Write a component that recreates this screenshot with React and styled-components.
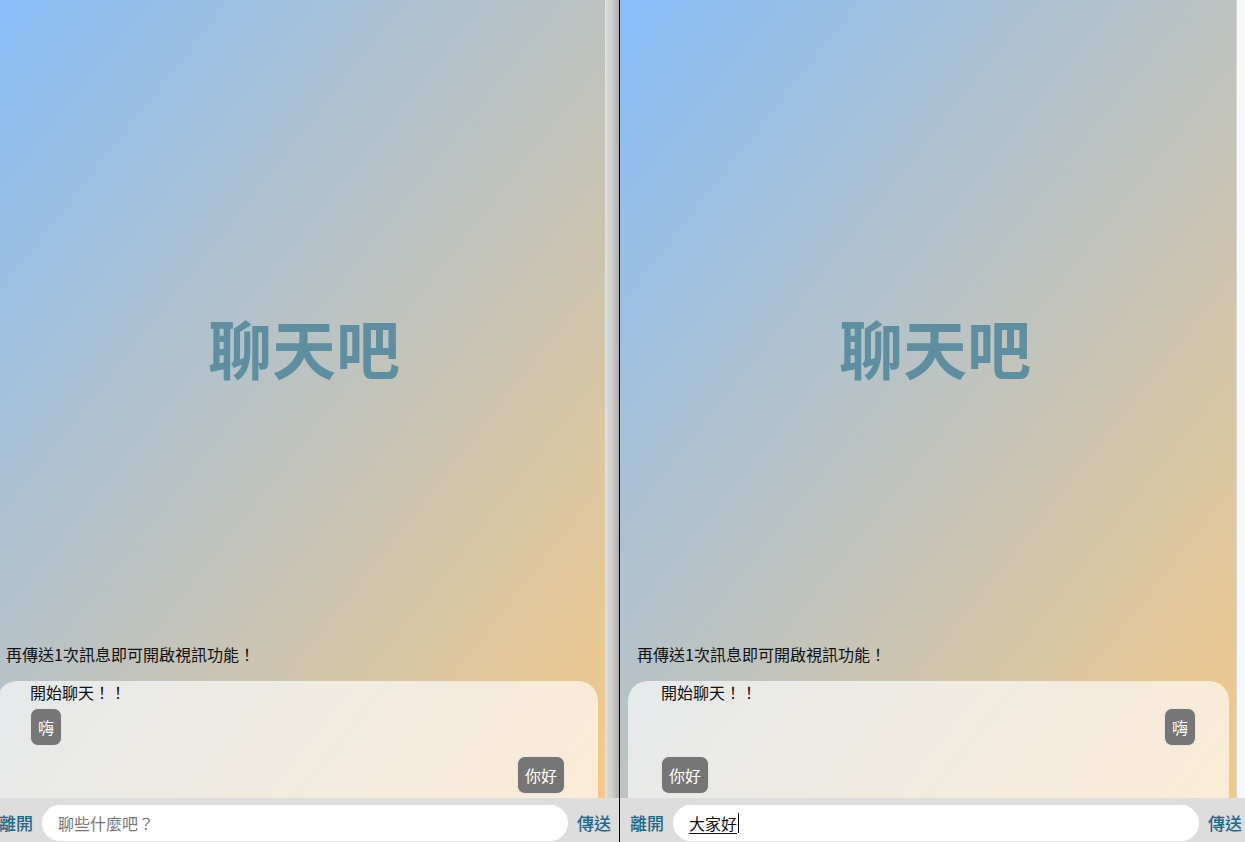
import React from "react";
import styled, { createGlobalStyle } from "styled-components";

const Global = createGlobalStyle`
  html, body { margin: 0; padding: 0; overflow: hidden; background: #ffffff; }
  body { font-family: "Noto Sans CJK TC", "Noto Sans", sans-serif; }
  * { box-sizing: border-box; }
`;

const Screen = styled.div`
  display: flex;
  width: 1245px;
  height: 842px;
  overflow: hidden;
`;

const Frame = styled.div`
  flex: none;
  width: ${(p) => p.$width}px;
  height: 842px;
  overflow: hidden;
  border-right: ${(p) => (p.$divider ? "1px solid #000" : "none")};
`;

const Page = styled.div`
  position: relative;
  width: 630px;
  height: 842px;
  margin-left: ${(p) => -p.$scrollX}px;
  display: flex;
  flex-direction: column;
`;

const Main = styled.div`
  flex: 1;
  display: flex;
  flex-direction: column;
  background: linear-gradient(to bottom right, #87bdf8 0%, #f4c987 100%);
  min-height: 0;
`;

const Gutter = styled.div`
  position: absolute;
  top: 0;
  right: 0;
  bottom: 44px;
  width: 14px;
  background: ${(p) =>
    p.$variant === "dark"
      ? "linear-gradient(to right, #dcdcdc 0%, #cfcfcf 45%, #adadad 100%)"
      : "#f8f8f8"};
  border-left: 1px solid ${(p) => (p.$variant === "dark" ? "#e2e2e2" : "#d4d4d4")};
`;

const Title = styled.h1`
  margin: 314px 0 0;
  text-align: center;
  font-size: 64px;
  line-height: 64px;
  font-weight: 700;
  color: #5e8fa1;
`;

const Spacer = styled.div`
  flex: 1;
`;

const Notice = styled.div`
  margin: 0 0 16px 17px;
  font-size: 16px;
  line-height: 22px;
  color: #111;
`;

const ChatBox = styled.div`
  height: 117px;
  margin: 0 21px 0 8px;
  padding: 1px 33px 0;
  border-radius: 20px 20px 0 0;
  background: rgba(255, 255, 255, 0.65);
  overflow: hidden;
`;

const ChatHeader = styled.div`
  font-size: 16px;
  line-height: 20px;
  color: #111;
`;

const MsgRow = styled.div`
  display: flex;
  justify-content: ${(p) => (p.$mine ? "flex-end" : "flex-start")};
  padding: 6px 0 4px;
`;

const Bubble = styled.div`
  padding: 7px 7px;
  border: 1px solid #e6e6e6;
  border-radius: 8px;
  background: #767676;
  color: #fff;
  font-size: 16px;
  line-height: 22px;
  min-width: 32px;
  text-align: center;
`;

const Bar = styled.div`
  position: relative;
  z-index: 1;
  flex: none;
  height: 44px;
  display: flex;
  align-items: flex-start;
  gap: 9px;
  padding: 7px 8px 0 10px;
  background: #dddddd;
`;

const BarButton = styled.button`
  flex: none;
  border: 0;
  padding: 0;
  background: none;
  height: 36px;
  font-family: inherit;
  font-size: 17px;
  font-weight: 500;
  line-height: 36px;
  color: #1f6a8b;
  cursor: pointer;
`;

const InputPill = styled.div`
  flex: 1;
  height: 36px;
  display: flex;
  align-items: center;
  padding: 0 16px;
  border-radius: 18px;
  background: #fff;
  font-size: 16px;
  line-height: 22px;
  color: ${(p) => (p.$placeholder ? "#777" : "#111")};
`;

const Composing = styled.span`
  text-decoration: underline;
  text-underline-offset: 3px;
  text-decoration-thickness: 1px;
`;

const Caret = styled.span`
  display: inline-block;
  width: 1px;
  height: 20px;
  background: #000;
  margin-left: 1px;
`;

function ChatFrame({ width, scrollX, divider, gutter, messages, input }) {
  return (
    <Frame $width={width} $divider={divider}>
      <Page $scrollX={scrollX}>
        <Main>
          <Title>聊天吧</Title>
          <Spacer />
          <Notice>再傳送1次訊息即可開啟視訊功能！</Notice>
          <ChatBox>
            <ChatHeader>開始聊天！！</ChatHeader>
            {messages.map((m, i) => (
              <MsgRow key={i} $mine={m.mine}>
                <Bubble>{m.text}</Bubble>
              </MsgRow>
            ))}
          </ChatBox>
        </Main>
        <Gutter $variant={gutter} />
        <Bar>
          <BarButton>離開</BarButton>
          {input ? (
            <InputPill>
              <Composing>{input}</Composing>
              <Caret />
            </InputPill>
          ) : (
            <InputPill $placeholder>聊些什麼吧？</InputPill>
          )}
          <BarButton>傳送</BarButton>
        </Bar>
      </Page>
    </Frame>
  );
}

export default function App() {
  return (
    <>
      <Global />
      <Screen>
        <ChatFrame
          width={620}
          scrollX={11}
          divider
          gutter="dark"
          messages={[
            { text: "嗨", mine: false },
            { text: "你好", mine: true },
          ]}
        />
        <ChatFrame
          width={625}
          scrollX={0}
          gutter="light"
          messages={[
            { text: "嗨", mine: true },
            { text: "你好", mine: false },
          ]}
          input="大家好"
        />
      </Screen>
    </>
  );
}
